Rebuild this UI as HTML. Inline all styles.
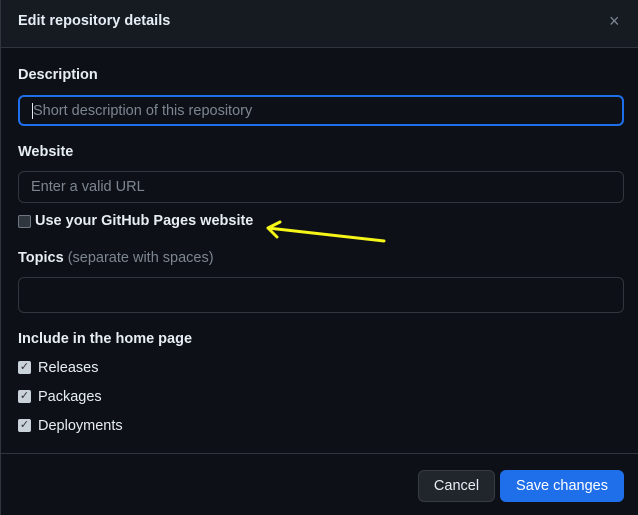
<!DOCTYPE html>
<html><head><style>
*{box-sizing:border-box;margin:0;padding:0}
body{width:638px;height:515px;background:#0d1117;font-family:"Liberation Sans",sans-serif;color:#e6edf3;position:relative;overflow:hidden;font-size:14.5px}
.hdr{position:absolute;left:0;top:0;width:638px;height:48px;background:#161b22;border-bottom:1px solid #30363d;border-left:1px solid #30363d}
.abs{position:absolute}
.lbl{font-weight:bold;font-size:14.5px}
.inp{position:absolute;left:18px;width:606px;border:1px solid #30363d;border-radius:6px;background:#0d1117;color:#7d8590;font-size:14.5px;padding-left:12px;display:flex;align-items:center}
.cb{position:absolute;left:18px;width:13px;height:13px;border-radius:2px;background:#c9d1d9;color:#333;font-size:11px;line-height:13px;text-align:center}
.ct{position:absolute;left:38px;font-size:14.5px}
</style></head><body>
<div class="hdr"></div>
<div class="abs" style="left:0;top:0;width:1px;height:515px;background:#30363d"></div>
<div class="abs lbl" style="left:18px;top:13px">Edit repository details</div>
<div class="abs" style="left:609px;top:11px;font-size:18px;color:#7d8590">×</div>
<div class="abs lbl" style="left:18px;top:67px">Description</div>
<div class="inp" style="top:95px;height:31px;border:2px solid #1f6feb"><span style="border-left:1px solid #e6edf3;height:16px"></span>Short description of this repository</div>
<div class="abs lbl" style="left:18px;top:144px">Website</div>
<div class="inp" style="top:171px;height:32px">Enter a valid URL</div>
<div class="abs" style="left:18px;top:215px;width:13px;height:13px;border:1px solid #6e7681;border-radius:2px;background:#30363d"></div>
<div class="abs lbl" style="left:35px;top:213px">Use your GitHub Pages website</div>
<svg class="abs" style="left:258px;top:218px" width="132" height="28"><path d="M126 23 L10 10 M10 10 L22 4 M10 10 L19 19" stroke="#f5f518" stroke-width="3" fill="none" stroke-linecap="round"/></svg>
<div class="abs" style="left:18px;top:250px"><b>Topics</b> <span style="color:#7d8590">(separate with spaces)</span></div>
<div class="inp" style="top:277px;height:36px"></div>
<div class="abs lbl" style="left:18px;top:331px">Include in the home page</div>
<div class="cb" style="top:361px">✓</div><div class="ct" style="top:360px">Releases</div>
<div class="cb" style="top:390px">✓</div><div class="ct" style="top:389px">Packages</div>
<div class="cb" style="top:419px">✓</div><div class="ct" style="top:418px">Deployments</div>
<div class="abs" style="left:0;top:453px;width:638px;height:1px;background:#30363d"></div>
<div class="abs" style="left:418px;top:470px;width:77px;height:32px;background:#21262d;border:1px solid #363b42;border-radius:6px;text-align:center;line-height:30px">Cancel</div>
<div class="abs" style="left:500px;top:470px;width:124px;height:32px;background:#1f6feb;border-radius:6px;text-align:center;line-height:32px;color:#fff">Save changes</div>
</body></html>
